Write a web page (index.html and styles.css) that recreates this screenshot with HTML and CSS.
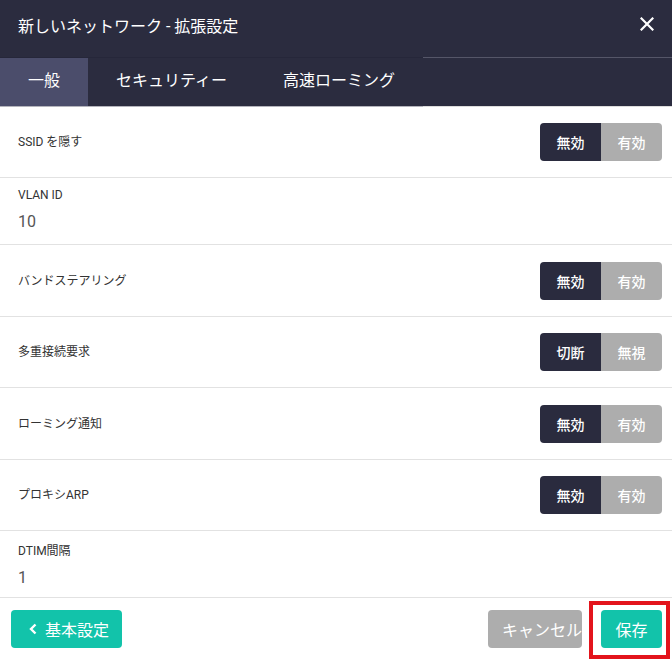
FILE: index.html
```html
<!DOCTYPE html>
<html lang="ja">
<head>
<meta charset="utf-8">
<link rel="stylesheet" href="styles.css">
</head>
<body>
<div class="dialog">
  <header class="head">
    <div class="title">新しいネットワーク - 拡張設定</div>
    <svg class="close" width="14" height="14" viewBox="0 0 14 14"><path d="M1.5 1.5 L12.5 12.5 M12.5 1.5 L1.5 12.5" stroke="#fff" stroke-width="2.2" stroke-linecap="square"/></svg>
  </header>
  <nav class="tabbar">
    <div class="tabs">
      <div class="tab active">一般</div>
      <div class="tab">セキュリティー</div>
      <div class="tab">高速ローミング</div>
    </div>
    <div class="tabfill"></div>
  </nav>
  <main class="body">
    <div class="row">
      <div class="label">SSID を隠す</div>
      <div class="toggle"><span class="on">無効</span><span class="off">有効</span></div>
    </div>
    <div class="row field">
      <div class="label">VLAN ID</div>
      <div class="value">10</div>
    </div>
    <div class="row tall">
      <div class="label">バンドステアリング</div>
      <div class="toggle"><span class="on">無効</span><span class="off">有効</span></div>
    </div>
    <div class="row">
      <div class="label">多重接続要求</div>
      <div class="toggle"><span class="on">切断</span><span class="off">無視</span></div>
    </div>
    <div class="row tall">
      <div class="label">ローミング通知</div>
      <div class="toggle"><span class="on">無効</span><span class="off">有効</span></div>
    </div>
    <div class="row">
      <div class="label">プロキシARP</div>
      <div class="toggle"><span class="on">無効</span><span class="off">有効</span></div>
    </div>
    <div class="row field">
      <div class="label">DTIM間隔</div>
      <div class="value">1</div>
    </div>
  </main>
  <footer class="foot">
    <button class="btn green back"><svg width="10" height="12" viewBox="0 0 10 12"><path d="M6.5 1.5 L2 6 L6.5 10.5" fill="none" stroke="#fff" stroke-width="2.4"/></svg>基本設定</button>
    <div class="actions">
      <button class="btn gray">キャンセル</button>
      <div class="savewrap">
        <button class="btn green save">保存</button>
        <div class="mark"></div>
      </div>
    </div>
  </footer>
</div>
</body>
</html>
```

FILE: styles.css
```css
* { box-sizing: border-box; }
html, body { margin: 0; padding: 0; background: #fff; }
body {
  font-family: Roboto, "Noto Sans CJK JP", sans-serif;
  width: 672px;
  height: 659px;
  overflow: hidden;
}
.dialog { display: flex; flex-direction: column; height: 659px; }
.head {
  height: 57px;
  background: #2b2c3f;
  display: flex;
  align-items: center;
  justify-content: space-between;
  padding: 0 18px 7px 18px;
  color: #fff;
}
.title { font-size: 16px; }
.close { margin-top: -2px; }
.tabbar {
  display: flex;
  height: 50px;
  background: #2b2c3f;
}
.tabs {
  display: flex;
  border-bottom: 1px solid #b4b4bc;
  border-top: 1px solid #26273a;
}
.tab {
  padding: 0 28px 6px 28px;
  display: flex;
  align-items: center;
  color: #fff;
  font-size: 16px;
  height: 48px;
}
.tab.active { background: #4b4d6b; }
.tabfill {
  flex: 1;
  border-top: 1px solid #555668;
  border-bottom: 1px solid #dcdcdc;
}
.body { display: flex; flex-direction: column; }
.row {
  height: 71px;
  border-bottom: 1px solid #e2e2e2;
  display: flex;
  align-items: center;
  justify-content: space-between;
  padding: 0 10px 0 18px;
}
.row.tall { height: 72px; }
.row .label { margin-bottom: 3px; }
.row.field {
  height: 67px;
  flex-direction: column;
  align-items: flex-start;
  justify-content: flex-start;
  padding-top: 10px;
}
.row.field .label { margin-bottom: 0; }
.label { font-size: 12px; color: #333; }
.value { font-size: 16px; color: #555; margin-top: 10px; }
.toggle {
  display: flex;
  height: 38px;
  border-radius: 4px;
  overflow: hidden;
}
.toggle span {
  width: 61px;
  display: flex;
  align-items: center;
  justify-content: center;
  color: #fff;
  font-size: 14px;
  font-weight: 500;
}
.toggle .on { background: #2a2b3e; }
.toggle .off { background: #adadad; }
.foot {
  flex: 1;
  display: flex;
  align-items: flex-start;
  justify-content: space-between;
  padding: 12px 10px 0 11px;
}
.btn {
  height: 38px;
  border: none;
  border-radius: 4px;
  color: #fff;
  font-family: Roboto, "Noto Sans CJK JP", sans-serif;
  font-size: 16px;
  display: flex;
  align-items: center;
  justify-content: center;
  cursor: pointer;
}
.green { background: #12c3aa; }
.gray { background: #adadad; width: 94px; padding: 0 0 0 14px; justify-content: flex-start; }
.back { width: 111px; padding: 0 0 0 18px; gap: 6px; justify-content: flex-start; }
.actions { display: flex; gap: 19px; }
.savewrap { position: relative; }
.save { width: 61px; padding: 0; }
.mark {
  position: absolute;
  left: -12px;
  top: -9px;
  right: -8px;
  bottom: -11px;
  border: 4px solid #e3141c;
  pointer-events: none;
}
```
